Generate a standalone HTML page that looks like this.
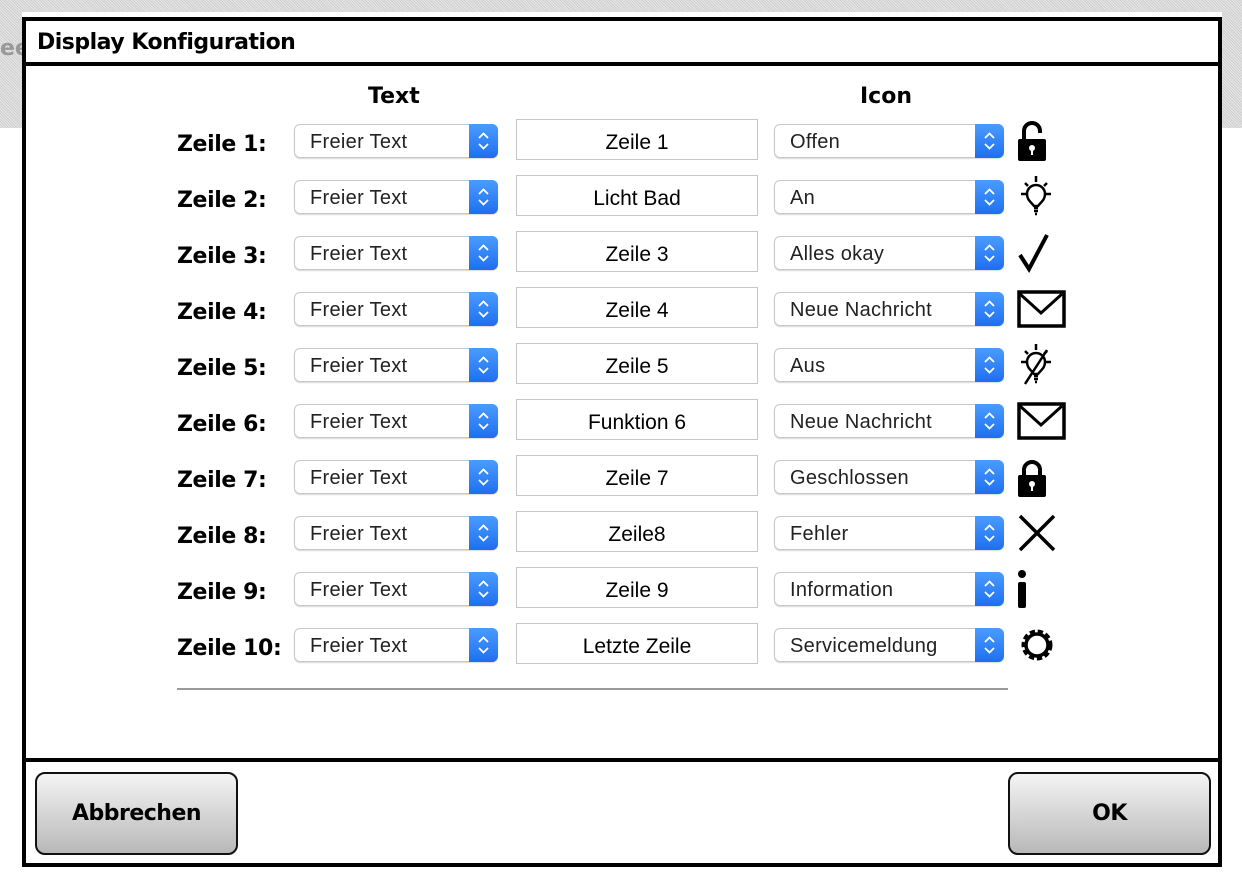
<!DOCTYPE html>
<html><head><meta charset="utf-8"><style>
*{margin:0;padding:0;box-sizing:border-box}
body{width:1242px;height:890px;position:relative;background:#fff;overflow:hidden;font-family:"Liberation Sans",sans-serif}
.pat{position:absolute;background:#dcdcdc;background-image:repeating-linear-gradient(45deg,#cfcfcf 0 1px,#e6e6e6 1px 2px)}
.dlg{position:absolute;left:22px;top:17px;width:1200px;height:850px;border:4px solid #000;background:#fff}
.title{position:absolute;left:0;top:0;right:0;height:45px;border-bottom:4px solid #000;font:bold 22px "DejaVu Sans",sans-serif;padding:9px 0 0 11px;letter-spacing:-0.5px}
.foot{position:absolute;left:0;right:0;top:737px;height:4px;background:#000}
.btn{position:absolute;top:751px;width:203px;height:83px;border:2px solid #111;border-radius:10px;background:linear-gradient(#f4f4f4,#b8b8b8);font:bold 22px "DejaVu Sans",sans-serif;text-align:center;line-height:79px;letter-spacing:-0.5px}
.hdr{position:absolute;top:63px;font:bold 22px "DejaVu Sans",sans-serif}
.lbl{position:absolute;left:151px;font:bold 22px "DejaVu Sans",sans-serif;letter-spacing:-0.4px}
.sel{position:absolute;height:34px;border:1px solid #c8c8c8;border-radius:6px;background:#fff;box-shadow:0 1px 1px rgba(0,0,0,.15);font-size:20px;color:#222;padding:6px 0 0 15px;letter-spacing:.3px}
.sel .ar{position:absolute;right:-1px;top:-1px;bottom:-1px;width:29px;background:linear-gradient(#4a9cff,#1e6ff0);border-radius:0 6px 6px 0}
.tb{position:absolute;left:490px;width:242px;height:41px;border:1px solid #c6c6c6;text-align:center;font-size:21px;padding-top:11px}
.ic{position:absolute;width:50px;height:44px}
.line{position:absolute;left:151px;top:667px;width:831px;height:2px;background:#999}
</style></head><body>
<div class="pat" style="left:0;top:0;width:1242px;height:12px"></div>
<div class="pat" style="left:0;top:12px;width:22px;height:116px"></div>
<div class="pat" style="left:1222px;top:12px;width:20px;height:116px"></div>
<div style="position:absolute;left:0;top:36px;font:bold 22px 'DejaVu Sans',sans-serif;color:#999;width:22px;overflow:hidden">ee</div>
<div class="dlg">
<div class="title">Display Konfiguration</div>
<div class="hdr" style="left:342px">Text</div>
<div class="hdr" style="left:834px">Icon</div>
<div id="rows"></div>
<div class="line"></div>
<div class="foot"></div>
<div class="btn" style="left:9px">Abbrechen</div>
<div class="btn" style="left:982px">OK</div>
</div>
<script>
var t=["Zeile 1","Licht Bad","Zeile 3","Zeile 4","Zeile 5","Funktion 6","Zeile 7","Zeile8","Zeile 9","Letzte Zeile"];
var s=["Offen","An","Alles okay","Neue Nachricht","Aus","Neue Nachricht","Geschlossen","Fehler","Information","Servicemeldung"];
var arr='<svg width="29" height="34" viewBox="0 0 29 34"><path d="M10 14l4.5-4.5 4.5 4.5M10 20l4.5 4.5 4.5-4.5" fill="none" stroke="#fff" stroke-width="1.8"/></svg>';
var lock='<rect x="2" y="20" width="28" height="22" rx="2"/><circle cx="16" cy="29" r="3" fill="#fff"/><rect x="15" y="29" width="2" height="7" fill="#fff"/>';
var bulb='<g fill="none" stroke="#000" stroke-width="2.5"><path d="M17 31c-3-4-7-6-7-12a9 9 0 0118 0c0 6-4 8-7 12z"/><path d="M17 33h4M17 36h4M18 39h2"/><path d="M19 1v6M4 19h5M29 19h5M8 8l3 3M30 8l-3 3"/></g>';
var env='<svg width="50" height="44"><rect x="2" y="5" width="45" height="34" fill="none" stroke="#000" stroke-width="3.5"/><path d="M3 7l21 19 21-19" fill="none" stroke="#000" stroke-width="3"/></svg>';
var icons=[
'<svg width="40" height="44"><path d="M8 20v-8a8 8 0 0116 0v2" fill="none" stroke="#000" stroke-width="4"/>'+lock+'</svg>',
'<svg width="40" height="44">'+bulb+'</svg>',
'<svg width="40" height="44"><path d="M3 24l9 14L30 4" fill="none" stroke="#000" stroke-width="4"/></svg>',
env,
'<svg width="40" height="44">'+bulb+'<path d="M8 41L30 7" stroke="#000" stroke-width="2.5"/></svg>',
env,
'<svg width="40" height="44"><path d="M8 20v-5a8 8 0 0116 0v5" fill="none" stroke="#000" stroke-width="4"/>'+lock+'</svg>',
'<svg width="40" height="44"><path d="M3 5l34 34M37 5L3 39" stroke="#000" stroke-width="3.5"/></svg>',
'<svg width="40" height="44"><circle cx="6" cy="7" r="4"/><rect x="2" y="15" width="8" height="26" rx="2"/></svg>',
'<svg width="40" height="44"><circle cx="20" cy="22" r="13" fill="none" stroke="#000" stroke-width="5" stroke-dasharray="5 2.7"/><circle cx="20" cy="22" r="11" fill="none" stroke="#000" stroke-width="3.5"/></svg>'];
var h='';
for(var i=0;i<10;i++){var y=i*56;
h+='<div class="lbl" style="top:'+(111+y)+'px">Zeile '+(i+1)+':</div>';
h+='<div class="sel" style="left:268px;width:204px;top:'+(103+y)+'px">Freier Text<div class="ar">'+arr+'</div></div>';
h+='<div class="tb" style="top:'+(98+y)+'px">'+t[i]+'</div>';
h+='<div class="sel" style="left:748px;width:230px;top:'+(103+y)+'px">'+s[i]+'<div class="ar">'+arr+'</div></div>';
h+='<div class="ic" style="top:'+(98+y)+'px;left:'+(i==0||i==6||i==8?990:991)+'px">'+icons[i]+'</div>';}
document.getElementById('rows').innerHTML=h;
</script>
</body></html>
